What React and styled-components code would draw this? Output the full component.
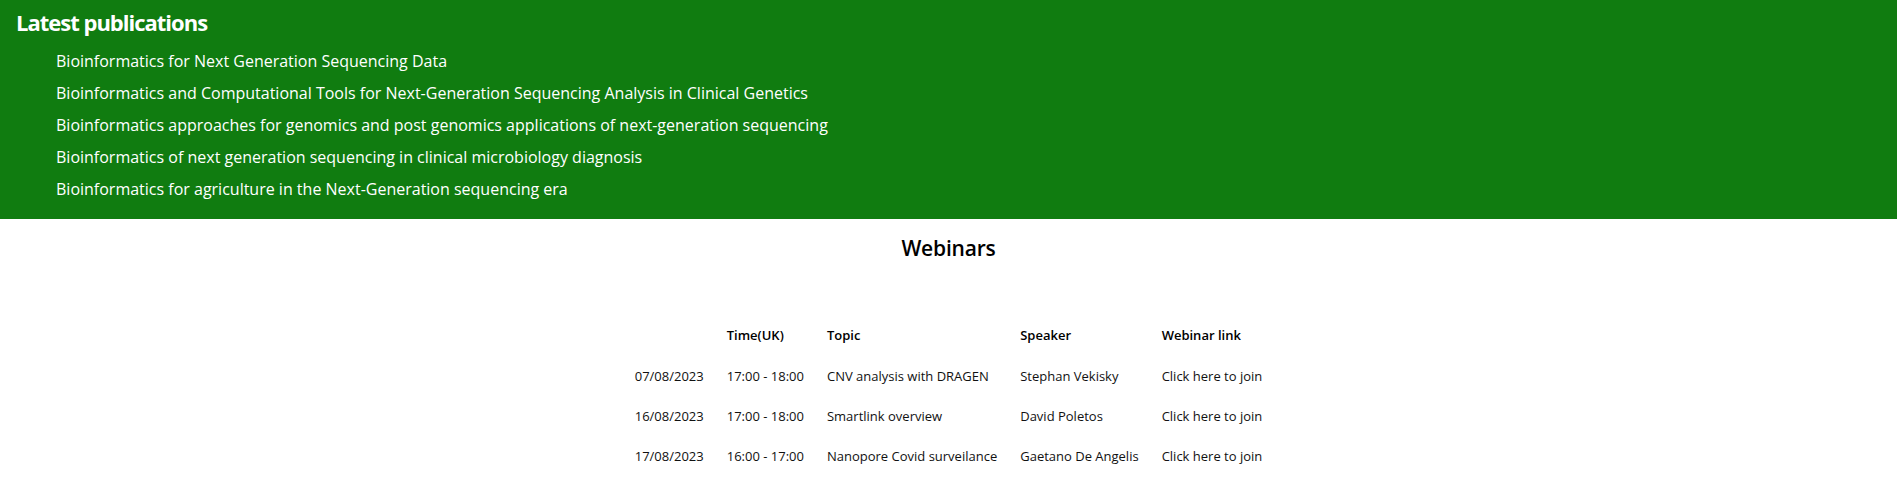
import React from "react";
import styled, { createGlobalStyle } from "styled-components";

const GlobalStyle = createGlobalStyle`
	body {
		margin: 0;
		font-family: "Open Sans", "Liberation Sans", sans-serif;
		background: #ffffff;
		color: #000000;
	}
`;

const publications = [
	"Bioinformatics for Next Generation Sequencing Data",
	"Bioinformatics and Computational Tools for Next-Generation Sequencing Analysis in Clinical Genetics",
	"Bioinformatics approaches for genomics and post genomics applications of next-generation sequencing",
	"Bioinformatics of next generation sequencing in clinical microbiology diagnosis",
	"Bioinformatics for agriculture in the Next-Generation sequencing era",
];

const webinars = [
	{ date: "07/08/2023", time: "17:00 - 18:00", topic: "CNV analysis with DRAGEN", speaker: "Stephan Vekisky" },
	{ date: "16/08/2023", time: "17:00 - 18:00", topic: "Smartlink overview", speaker: "David Poletos" },
	{ date: "17/08/2023", time: "16:00 - 17:00", topic: "Nanopore Covid surveilance", speaker: "Gaetano De Angelis" },
];

export default function App() {
	return (
		<>
			<GlobalStyle />
			<Publications>
				<SectionTitle>Latest publications</SectionTitle>
				<PubList>
					{publications.map((p) => (
						<PubItem key={p}>
							<PubLink href="#">{p}</PubLink>
						</PubItem>
					))}
				</PubList>
			</Publications>

			<Webinars>
				<WebinarTitle>Webinars</WebinarTitle>
				<Table>
					<thead>
						<tr>
							<HeadCell />
							<HeadCell>Time(UK)</HeadCell>
							<HeadCell>Topic</HeadCell>
							<HeadCell>Speaker</HeadCell>
							<HeadCell>Webinar link</HeadCell>
						</tr>
					</thead>
					<tbody>
						{webinars.map((w) => (
							<tr key={w.date}>
								<Cell>{w.date}</Cell>
								<Cell>{w.time}</Cell>
								<Cell>{w.topic}</Cell>
								<Cell>{w.speaker}</Cell>
								<Cell>
									<JoinLink href="#">Click here to join</JoinLink>
								</Cell>
							</tr>
						))}
					</tbody>
				</Table>
			</Webinars>
		</>
	);
}

const Publications = styled.section`
	background-color: #107c10;
	color: #ffffff;
	padding: 8px 16px 14px;
	height: 219px;
	box-sizing: border-box;
`;

const SectionTitle = styled.h2`
	margin: 0;
	font-size: 22px;
	font-weight: 700;
	line-height: 29px;
	letter-spacing: -1px;
`;

const PubList = styled.ul`
	list-style: none;
	margin: 8px 0 0;
	padding-left: 40px;
`;

const PubItem = styled.li`
	font-size: 16px;
	line-height: 32px;
`;

const PubLink = styled.a`
	color: #ffffff;
	text-decoration: none;
`;

const Webinars = styled.section`
	display: flex;
	flex-direction: column;
	align-items: center;
	padding-top: 14px;
`;

const WebinarTitle = styled.h2`
	margin: 0 0 57px;
	font-size: 21px;
	font-weight: 600;
	line-height: 30px;
	letter-spacing: -0.2px;
`;

const Table = styled.table`
	border-collapse: collapse;
	font-size: 13px;
`;

const HeadCell = styled.th`
	text-align: left;
	font-weight: 600;
	padding: 0 11.5px 6px;
	height: 30px;
`;

const Cell = styled.td`
	padding: 0 11.5px;
	height: 40px;
	font-weight: 400;
	color: #111111;
`;

const JoinLink = styled.a`
	color: #111111;
	text-decoration: none;
`;
